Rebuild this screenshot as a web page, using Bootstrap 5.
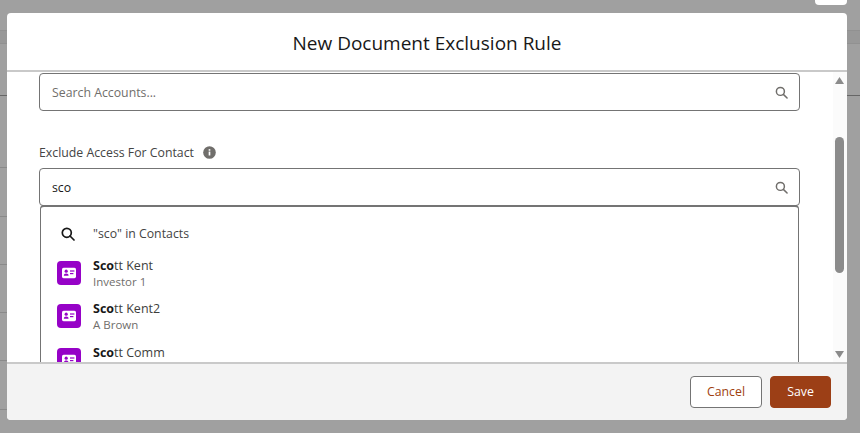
<!DOCTYPE html>
<html lang="en">
<head>
  <meta charset="UTF-8" />
  <meta name="viewport" content="width=device-width, initial-scale=1.0"/>
  <title>New Document Exclusion Rule</title>
  <link href="https://cdn.jsdelivr.net/npm/bootstrap@5.3.0/dist/css/bootstrap.min.css" rel="stylesheet"/>
  <script src="https://cdn.jsdelivr.net/npm/bootstrap@5.3.0/dist/js/bootstrap.bundle.min.js"></script>
  <style>
  body {
    background-color: #a0a0a0;
    font-family: "Open Sans", sans-serif;
    font-size: 12.3px;
    color: #181818;
    height: 433px;
    overflow: hidden;
    position: relative;
  }

  /* page behind the backdrop */
  .bg-tab { width: 32px; height: 5px; background: #fff; border-radius: 0 0 4px 4px; margin-left: 815px; }
  .bg-band { height: 14px; margin-top: 25px; background: #989898; border-top: 1px solid #919191; border-bottom: 1px solid #919191; }
  .bg-first { height: 52px; border-bottom: 1px solid #666; }
  .bg-line { width: 50%; height: 48px; border-bottom: 1px solid #8a8a8a; }
  .bg-line-first { height: 72px; }
  .bg-line-tall { height: 49px; }

  .rule-modal {
    position: absolute;
    left: 7px;
    top: 13px;
    width: 840px;
    height: 407px;
    background: #fff;
    border-radius: 4px;
    overflow: hidden;
  }
  .rule-head {
    height: 59px;
    border-bottom: 2px solid #c9c9c9;
    font-size: 19px;
    padding-top: 3px;
  }
  .rule-main { height: 290px; overflow: hidden; }
  .rule-scroll { flex: 1; padding: 1px 33px 0 32px; min-width: 0; }
  .rule-foot {
    height: 58px;
    background: #f3f3f3;
    border-top: 2px solid #c9c9c9;
    padding: 0 16px 0 0;
  }

  .field-box {
    height: 38px;
    border: 1px solid #747474;
    border-radius: 4px;
    background: #fff;
    padding-right: 11px;
  }
  .field-box .form-control {
    border: 0;
    box-shadow: none;
    background: transparent;
    font-size: 12.3px;
    color: #181818;
    padding: 0 12px;
    height: 36px;
    border-radius: 4px;
  }
  .field-box .form-control::placeholder { color: #706e6b; opacity: 1; }
  .field-label { margin-top: 34px; height: 23px; padding-bottom: 6px; color: #444; }
  .info-dot { margin-left: 9px; margin-top: -2px; }

  .result-list {
    margin: -1px 1px 0;
    border: 1px solid #747474;
    border-top-width: 2px;
    border-radius: 4px;
    background: #fff;
    padding: 12px 16px 0;
    height: 300px;
  }
  .result-find { height: 28px; color: #444; margin-bottom: 8.6px; padding-top: 2px; }
  .result-find svg { margin: -1px 18px 0 4px; }
  .result-row { height: 43.5px; }
  .tile {
    width: 24px;
    height: 24px;
    background: #9602c7;
    border-radius: 4px;
    margin-right: 12px;
    margin-top: 5px;
  }
  .result-name { line-height: 17px; margin-top: 1px; font-size: 12.5px; color: #3e3e3c; }
  .result-name b { color: #181818; font-weight: 700; }
  .result-sub { line-height: 16px; color: #706e6b; font-size: 11.5px; }

  .fake-bar { width: 14px; background: #fbfbfb; }
  .bar-arrow { height: 7px; width: 9px; margin: 5px 0 0 2px; }
  .bar-thumb { width: 9px; height: 136px; margin: 53px 0 78px 2px; background: #8b8b8b; border-radius: 5px; }

  .btn-cancel, .btn-save {
    height: 32px;
    font-size: 12.3px;
    border-radius: 4px;
    padding: 0;
    font-family: inherit;
  }
  .btn-cancel { width: 72px; background: #fff; color: #a0400f; border: 1px solid #747474; margin-right: 8px; }
  .btn-save { width: 61px; background: #9c3f16; color: #fff; border: 1px solid #9c3f16; }
</style>
</head>
<body>

<div class="bg-tab"></div>
<div class="bg-band"></div>
<div class="bg-first"></div>
<div class="bg-line bg-line-first"></div>
<div class="bg-line bg-line-tall"></div>
<div class="bg-line"></div>
<div class="bg-line"></div>
<div class="bg-line"></div>
<div class="bg-line bg-line-tall"></div>

<div class="rule-modal d-flex flex-column">
  <div class="rule-head d-flex align-items-center justify-content-center">New Document Exclusion Rule</div>

  <div class="rule-main d-flex">
    <div class="rule-scroll">
      <div class="field-box d-flex align-items-center">
        <input type="text" class="form-control" placeholder="Search Accounts..." />
        <svg width="13" height="13" viewBox="0 0 14 14" fill="none" stroke="#706e6b" stroke-width="1.6" class="flex-shrink-0"><circle cx="5.8" cy="5.8" r="4.3"/><path d="M9 9l4 4" stroke-linecap="round"/></svg>
      </div>

      <div class="field-label d-flex align-items-center">
        Exclude Access For Contact
        <svg class="info-dot" width="13" height="13" viewBox="0 0 14 14"><circle cx="7" cy="7" r="6.8" fill="#706e6b"/><rect x="6.1" y="6" width="1.8" height="4.2" fill="#fff"/><rect x="6.1" y="3.4" width="1.8" height="1.7" fill="#fff"/></svg>
      </div>

      <div class="field-box d-flex align-items-center">
        <input type="text" class="form-control" value="sco" />
        <svg width="13" height="13" viewBox="0 0 14 14" fill="none" stroke="#706e6b" stroke-width="1.6" class="flex-shrink-0"><circle cx="5.8" cy="5.8" r="4.3"/><path d="M9 9l4 4" stroke-linecap="round"/></svg>
      </div>

      <div class="result-list">
        <div class="result-find d-flex align-items-center">
          <svg width="14" height="14" viewBox="0 0 14 14" fill="none" stroke="#181818" stroke-width="1.7"><circle cx="5.8" cy="5.8" r="4.5"/><path d="M9 9l4 4" stroke-linecap="round"/></svg>
          "sco" in Contacts
        </div>
        <div id="results"></div>
      </div>
    </div>

    <div class="fake-bar flex-shrink-0">
      <svg class="bar-arrow d-block" viewBox="0 0 9 7"><path d="M4.5 0L9 7H0z" fill="#8b8b8b"/></svg>
      <div class="bar-thumb"></div>
      <svg class="bar-arrow d-block" viewBox="0 0 9 7"><path d="M4.5 7L9 0H0z" fill="#8b8b8b"/></svg>
    </div>
  </div>

  <div class="rule-foot d-flex align-items-center justify-content-end">
    <button class="btn btn-cancel">Cancel</button>
    <button class="btn btn-save">Save</button>
  </div>
</div>

<script>
const contactos = [
  { resto: 'tt Kent', sub: 'Investor 1' },
  { resto: 'tt Kent2', sub: 'A Brown' },
  { resto: 'tt Comm', sub: '' }
];

const icono = `<svg width="14" height="12" viewBox="0 0 14 12"><rect width="14" height="10.5" y="0.7" rx="1.6" fill="#fff"/><circle cx="4.2" cy="4.2" r="1.6" fill="#9602c7"/><path d="M1.8 8.8c0-1.6 1-2.4 2.4-2.4s2.4.8 2.4 2.4z" fill="#9602c7"/><rect x="8" y="3.4" width="4.4" height="1.2" fill="#9602c7"/><rect x="8" y="6" width="3.4" height="1.2" fill="#9602c7"/></svg>`;

document.getElementById('results').innerHTML = contactos.map(c => `
  <div class="result-row d-flex">
    <div class="tile d-flex align-items-center justify-content-center flex-shrink-0">${icono}</div>
    <div>
      <div class="result-name"><b>Sco</b>${c.resto}</div>
      <div class="result-sub">${c.sub}</div>
    </div>
  </div>`).join('');
</script>
</body>
</html>
